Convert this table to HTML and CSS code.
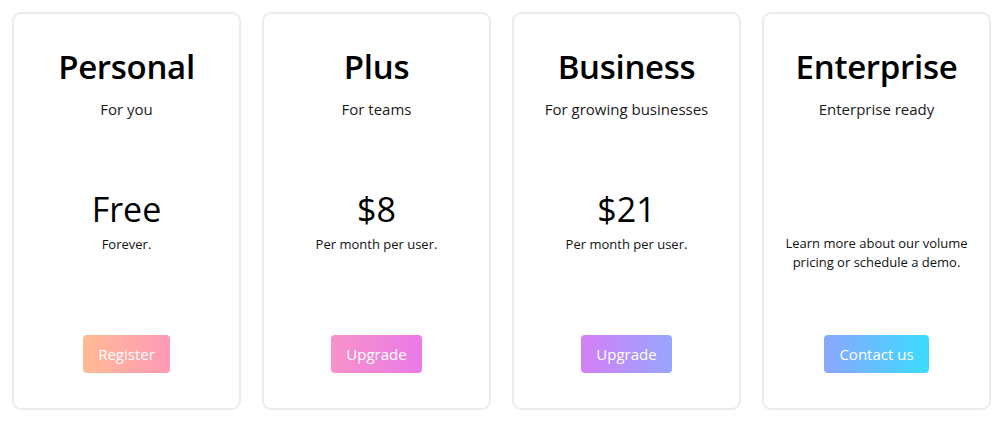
FILE: index.html
```html
<!DOCTYPE html>
<html>
<head>
<meta charset="utf-8">
<link rel="stylesheet" href="styles.css">
</head>
<body>
<main class="plans">
  <section class="card">
    <h2 class="title">Personal</h2>
    <p class="tagline">For you</p>
    <div class="price-block">
      <div class="price">Free</div>
      <div class="period">Forever.</div>
    </div>
    <a class="btn btn-personal">Register</a>
  </section>
  <section class="card">
    <h2 class="title">Plus</h2>
    <p class="tagline">For teams</p>
    <div class="price-block">
      <div class="price">$8</div>
      <div class="period">Per month per user.</div>
    </div>
    <a class="btn btn-plus">Upgrade</a>
  </section>
  <section class="card">
    <h2 class="title">Business</h2>
    <p class="tagline">For growing businesses</p>
    <div class="price-block">
      <div class="price">$21</div>
      <div class="period">Per month per user.</div>
    </div>
    <a class="btn btn-business">Upgrade</a>
  </section>
  <section class="card">
    <h2 class="title">Enterprise</h2>
    <p class="tagline">Enterprise ready</p>
    <div class="note">Learn more about our volume pricing or schedule a demo.</div>
    <a class="btn btn-enterprise">Contact us</a>
  </section>
</main>
</body>
</html>
```
FILE: styles.css
```css
* { box-sizing: border-box; }
html, body { margin: 0; padding: 0; background: #fff; }
body {
  font-family: "Open Sans", "Noto Sans", sans-serif;
  color: #111;
  width: 1004px;
  height: 423px;
  overflow: hidden;
}
.plans {
  display: grid;
  grid-template-columns: repeat(4, 229px);
  column-gap: 21px;
  padding: 12px 0 0 12px;
}
.card {
  height: 398px;
  border: 2px solid #ececec;
  border-radius: 9px;
  display: flex;
  flex-direction: column;
  align-items: center;
  padding: 33px 12px 35px;
  text-align: center;
}
.title {
  margin: 0;
  font-size: 33px;
  line-height: 40px;
  font-weight: 600;
  color: #000;
  letter-spacing: -0.3px;
}
.tagline {
  margin: 12px 0 0;
  font-size: 15px;
  line-height: 21px;
  color: #1a1a1a;
}
.price-block { margin-top: 66px; }
.price {
  font-size: 34px;
  line-height: 46px;
  font-weight: 400;
  color: #000;
}
.period {
  margin-top: 2px;
  font-size: 13px;
  line-height: 20px;
  color: #111;
}
.note {
  margin-top: 114px;
  font-size: 13px;
  line-height: 19px;
  color: #111;
  padding: 0 4px;
}
.btn {
  margin-top: auto;
  display: inline-flex;
  align-items: center;
  justify-content: center;
  height: 38px;
  padding: 0 15px;
  border-radius: 4px;
  color: #fff;
  font-size: 15px;
}
.btn-personal { background: linear-gradient(90deg, #ffbb94, #ff99b6); }
.btn-plus { background: linear-gradient(90deg, #f892c8, #ea7ae9); }
.btn-business { background: linear-gradient(90deg, #d57ff6, #97a6fd); }
.btn-enterprise { background: linear-gradient(90deg, #8ca6fe, #3adcff); }
```
